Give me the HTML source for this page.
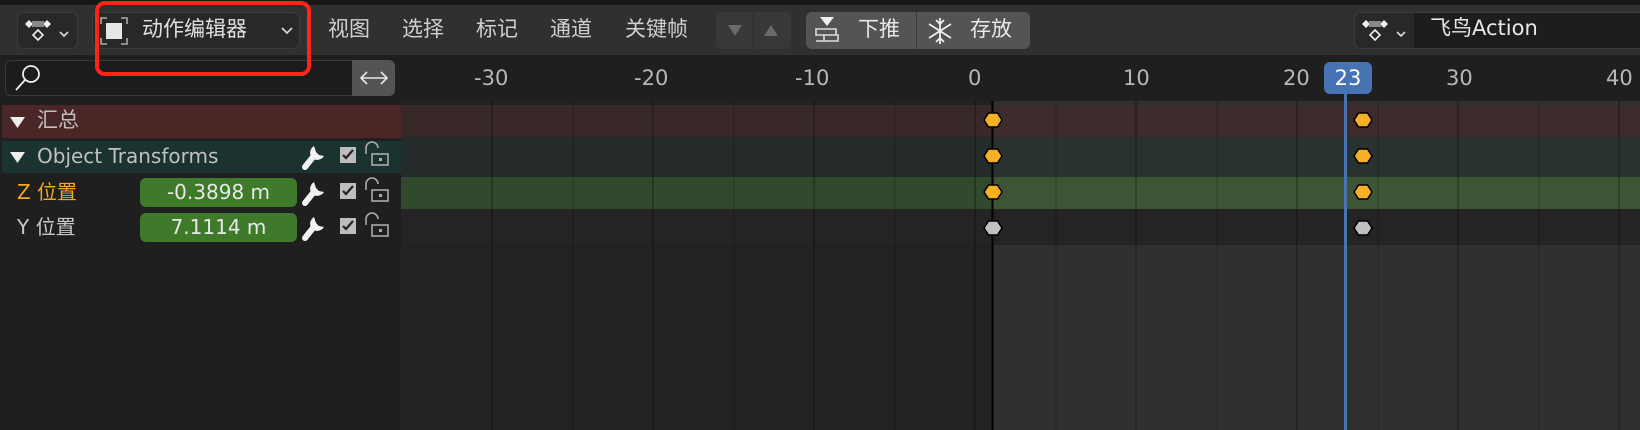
<!DOCTYPE html>
<html><head><meta charset="utf-8"><style>
*{margin:0;padding:0;box-sizing:border-box}
body{width:1640px;height:430px;background:#222;position:relative;overflow:hidden;font-family:"DejaVu Sans","Noto Sans CJK SC",sans-serif;color:#d0d0d0}
.a{position:absolute}
.t{font-size:20px;line-height:1;white-space:nowrap}
.btn{position:absolute;background:#282828;border:1px solid #3c3c3c;border-radius:7px}
</style></head><body>
<div class="a" style="left:0;top:0;width:1640px;height:5px;background:#161616"></div>
<div class="a" style="left:0;top:5px;width:1640px;height:50px;background:#303030"></div>
<div class="btn" style="left:17px;top:12px;width:61px;height:37px"></div>
<svg class="a" style="left:22px;top:16px" width="52" height="30" viewBox="0 0 52 30">
<path d="M3 8 L7 4 L11 8 L7 12Z M21 8 L25 4 L29 8 L25 12Z" fill="#eee"/><rect x="10" y="5" width="12" height="6" fill="#888"/>
<path d="M16 14 L21 19 L16 24 L11 19Z" fill="none" stroke="#eee" stroke-width="1.6"/>
<path d="M38 16 L42 20 L46 16" fill="none" stroke="#ddd" stroke-width="1.6"/></svg>
<div class="btn" style="left:92px;top:12px;width:208px;height:37px"></div>
<svg class="a" style="left:99px;top:16px" width="30" height="30" viewBox="0 0 30 30">
<path d="M2 8V2h6M22 2h6v6M28 22v6h-6M8 28H2v-6" fill="none" stroke="#aaa" stroke-width="1.6"/><rect x="7" y="7" width="16" height="16" fill="#e6e6e6"/></svg>
<div class="a t" style="left:142px;top:19px;font-size:21px;color:#e0e0e0">动作编辑器</div>
<svg class="a" style="left:280px;top:26px" width="14" height="10"><path d="M2 2 L7 7 L12 2" fill="none" stroke="#ddd" stroke-width="1.6"/></svg>
<div class="a t" style="left:328px;top:19px;font-size:21px">视图</div>
<div class="a t" style="left:402px;top:19px;font-size:21px">选择</div>
<div class="a t" style="left:476px;top:19px;font-size:21px">标记</div>
<div class="a t" style="left:550px;top:19px;font-size:21px">通道</div>
<div class="a t" style="left:625px;top:19px;font-size:21px">关键帧</div>
<div class="a" style="left:716px;top:12px;width:75px;height:37px;background:#383838;border-radius:6px"></div>
<div class="a" style="left:753px;top:12px;width:1px;height:37px;background:#2c2c2c"></div>
<svg class="a" style="left:726px;top:22px" width="60" height="16"><path d="M2 3h14l-7 11z" fill="#6a6a6a"/><path d="M38 14h14l-7-11z" fill="#6a6a6a"/></svg>
<div class="a" style="left:806px;top:12px;width:224px;height:37px;background:#545454;border-radius:6px"></div>
<div class="a" style="left:916px;top:12px;width:1px;height:37px;background:#3a3a3a"></div>
<svg class="a" style="left:814px;top:15px" width="34" height="32" viewBox="0 0 34 32"><path d="M6 2h14l-7 9z" fill="#eee"/><path d="M2 14h20v6H2z M10 20h14v6H10z M2 26h8" fill="none" stroke="#ddd" stroke-width="1.6"/></svg>
<div class="a t" style="left:858px;top:19px;font-size:21px;color:#e8e8e8">下推</div>
<svg class="a" style="left:925px;top:16px" width="30" height="30" viewBox="0 0 30 30"><g stroke="#eee" stroke-width="1.8" fill="none"><path d="M15 2v26M4 8l22 14M4 22L26 8"/><path d="M11 4l4 4 4-4M11 26l4-4 4 4"/></g></svg>
<div class="a t" style="left:970px;top:19px;font-size:21px;color:#e8e8e8">存放</div>
<div class="btn" style="left:1354px;top:12px;width:300px;height:37px"></div>
<div class="a" style="left:1414px;top:13px;width:226px;height:35px;background:#1d1d1d"></div>
<svg class="a" style="left:1359px;top:16px" width="52" height="30" viewBox="0 0 52 30">
<path d="M3 8 L7 4 L11 8 L7 12Z M21 8 L25 4 L29 8 L25 12Z" fill="#eee"/><rect x="10" y="5" width="12" height="6" fill="#888"/>
<path d="M16 14 L21 19 L16 24 L11 19Z" fill="none" stroke="#eee" stroke-width="1.6"/>
<path d="M38 16 L42 20 L46 16" fill="none" stroke="#ddd" stroke-width="1.6"/></svg>
<div class="a t" style="left:1430px;top:18px;font-size:21px;color:#e8e8e8">飞鸟Action</div>

<div class="a" style="left:0;top:55px;width:401px;height:375px;background:#1f1f1f"></div>
<div class="a" style="left:5px;top:60px;width:348px;height:36px;background:#1c1c1c;border:1px solid #3a3a3a;border-radius:6px 0 0 6px"></div>
<div class="a" style="left:352px;top:60px;width:43px;height:36px;background:#545454;border-radius:0 6px 6px 0"></div>
<svg class="a" style="left:12px;top:63px" width="32" height="30" viewBox="0 0 32 30"><circle cx="19" cy="11" r="8" fill="none" stroke="#eee" stroke-width="1.8"/><path d="M13 17L4 27" stroke="#eee" stroke-width="1.8"/></svg>
<svg class="a" style="left:359px;top:70px" width="30" height="16"><path d="M2 8h26M8 2L2 8l6 6M22 2l6 6-6 6" fill="none" stroke="#e8e8e8" stroke-width="1.6"/></svg>
<div class="a" style="left:2px;top:105px;width:399px;height:33px;background:#4a2626"></div>
<div class="a" style="left:2px;top:141px;width:399px;height:32px;background:#1b3330"></div>
<svg class="a" style="left:9px;top:115px" width="18" height="14"><path d="M1 2h15l-7.5 11z" fill="#eee"/></svg>
<div class="a t" style="left:37px;top:110px;color:#c0c0c0;font-size:21px">汇总</div>
<svg class="a" style="left:9px;top:150px" width="18" height="14"><path d="M1 2h15l-7.5 11z" fill="#eee"/></svg>
<div class="a t" style="left:37px;top:146px;color:#c0c0c0">Object Transforms</div>
<div class="a t" style="left:17px;top:182px;color:#f5a623">Z 位置</div>
<div class="a t" style="left:17px;top:217px;color:#c8c8c8">Y 位置</div>
<div class="a t" style="left:140px;top:178px;width:157px;height:29px;background:#3f7a2a;border-radius:6px;text-align:center;line-height:29px;color:#e8e8e8">-0.3898 m</div>
<div class="a t" style="left:140px;top:213px;width:157px;height:29px;background:#3f7a2a;border-radius:6px;text-align:center;line-height:29px;color:#e8e8e8">7.1114 m</div>
<svg class="a" style="left:300px;top:140px" width="100" height="106" viewBox="0 0 100 106">
<defs><g id="r">
<path d="M5 27 L13 17" stroke="#f2f2f2" stroke-width="6" stroke-linecap="round"/>
<path d="M14 6 a8 8 0 0 0 -2 12 a8 8 0 0 0 12 -2 l-5 -1 -3 -3 z" fill="#f2f2f2"/>
<rect x="40" y="7" width="16" height="16" fill="#bdbdbd"/><path d="M43 15l3 3 7-8" fill="none" stroke="#222" stroke-width="2.2"/>
<path d="M66 14 V8 a6 6 0 0 1 12 0" fill="none" stroke="#aaa" stroke-width="1.6"/><rect x="72" y="14" width="16" height="11" fill="none" stroke="#aaa" stroke-width="1.6"/><rect x="79" y="18" width="3" height="3" fill="#aaa"/>
</g></defs>
<use href="#r" x="0" y="0"/><use href="#r" x="0" y="36"/><use href="#r" x="0" y="71"/>
</svg>

<div class="a" style="left:401px;top:55px;width:1239px;height:46px;background:#1f1f1f"></div>
<div class="a" style="left:401px;top:101px;width:1239px;height:329px;background:#222"></div>
<div class="a" style="left:992px;top:101px;width:648px;height:329px;background:#303030"></div>
<div class="a" style="left:401px;top:105px;width:591px;height:32px;background:#382828"></div>
<div class="a" style="left:992px;top:105px;width:648px;height:32px;background:#3e2b2b"></div>
<div class="a" style="left:401px;top:137px;width:591px;height:40px;background:#252b2a"></div>
<div class="a" style="left:992px;top:137px;width:648px;height:40px;background:#2a3230"></div>
<div class="a" style="left:401px;top:177px;width:591px;height:32px;background:#33492d"></div>
<div class="a" style="left:992px;top:177px;width:648px;height:32px;background:#3d5535"></div>
<div class="a" style="left:401px;top:209px;width:1239px;height:36px;background:#242424"></div>
<svg class="a" style="left:410px;top:101px" width="1230" height="329">
<g stroke="#000" stroke-width="2" opacity="0.22">
<line x1="82" y1="0" x2="82" y2="329"/><line x1="243" y1="0" x2="243" y2="329"/><line x1="404" y1="0" x2="404" y2="329"/><line x1="565" y1="0" x2="565" y2="329"/>
<line x1="726" y1="0" x2="726" y2="329"/><line x1="887" y1="0" x2="887" y2="329"/><line x1="1048" y1="0" x2="1048" y2="329"/><line x1="1209" y1="0" x2="1209" y2="329"/></g>
<g stroke="#000" stroke-width="2" opacity="0.12">
<line x1="163" y1="0" x2="163" y2="329"/><line x1="324" y1="0" x2="324" y2="329"/><line x1="485" y1="0" x2="485" y2="329"/>
<line x1="646" y1="0" x2="646" y2="329"/><line x1="807" y1="0" x2="807" y2="329"/><line x1="968" y1="0" x2="968" y2="329"/><line x1="1129" y1="0" x2="1129" y2="329"/></g>
<line x1="582.5" y1="0" x2="582.5" y2="329" stroke="#000" stroke-width="2"/>
</svg>
<div class="a t" style="left:474px;top:68px;color:#b8b8b8;font-size:21px">-30</div>
<div class="a t" style="left:634px;top:68px;color:#b8b8b8;font-size:21px">-20</div>
<div class="a t" style="left:795px;top:68px;color:#b8b8b8;font-size:21px">-10</div>
<div class="a t" style="left:968px;top:68px;color:#b8b8b8;font-size:21px">0</div>
<div class="a t" style="left:1123px;top:68px;color:#b8b8b8;font-size:21px">10</div>
<div class="a t" style="left:1283px;top:68px;color:#b8b8b8;font-size:21px">20</div>
<div class="a t" style="left:1446px;top:68px;color:#b8b8b8;font-size:21px">30</div>
<div class="a t" style="left:1606px;top:68px;color:#b8b8b8;font-size:21px">40</div>
<div class="a" style="left:1344px;top:90px;width:3px;height:340px;background:#4772b3"></div>
<div class="a t" style="left:1324px;top:62px;width:48px;height:32px;background:#4772b3;border-radius:6px;text-align:center;line-height:32px;color:#fff;font-size:21px">23</div>
<svg class="a" style="left:980px;top:110px" width="400" height="130">
<defs><path id="k" d="M-9 0 L-4.5 -7 L4.5 -7 L9 0 L4.5 7 L-4.5 7Z" stroke="#000" stroke-width="1.5"/></defs>
<g fill="#f5b025"><use href="#k" x="13" y="10"/><use href="#k" x="383" y="10"/><use href="#k" x="13" y="46"/><use href="#k" x="383" y="46"/><use href="#k" x="13" y="82"/><use href="#k" x="383" y="82"/></g>
<g fill="#c0c0c0"><use href="#k" x="13" y="118"/><use href="#k" x="383" y="118"/></g>
</svg>
<div class="a" style="left:95px;top:1px;width:216px;height:75px;border:4px solid #ff2418;border-radius:10px"></div>
</body></html>
